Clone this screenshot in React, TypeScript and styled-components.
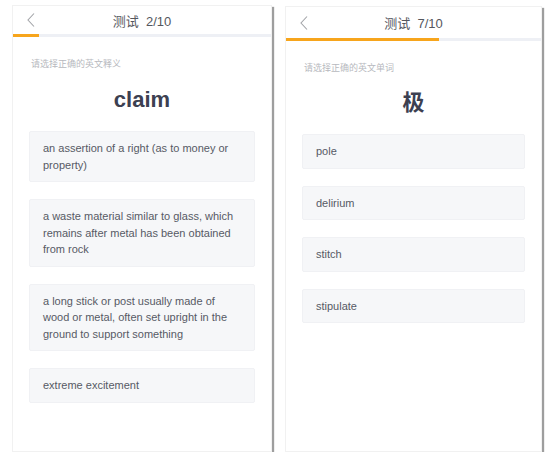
import React from "react";
import styled, { createGlobalStyle } from "styled-components";

const GlobalStyle = createGlobalStyle`
  *, *::before, *::after { box-sizing: border-box; }
  body {
    margin: 0;
    background: #ffffff;
    font-family: "Liberation Sans", "Noto Sans CJK SC", Arial, sans-serif;
  }
`;

const Page = styled.div`
  display: flex;
  align-items: flex-start;
  gap: 13px;
  padding: 5px 0 0 12px;
`;

const Phone = styled.div<{ $w: number; $h: number; $top: number }>`
  width: ${(p) => p.$w}px;
  height: ${(p) => p.$h}px;
  margin-top: ${(p) => p.$top}px;
  background: #ffffff;
  border: 1px solid #f1f1f1;
  box-shadow: 2px 2px 1px rgba(0, 0, 0, 0.38);
  display: flex;
  flex-direction: column;
`;

const Header = styled.div<{ $h: number }>`
  height: ${(p) => p.$h}px;
  display: grid;
  grid-template-columns: 1fr auto 1fr;
  align-items: center;
`;

const Back = styled.div`
  padding-left: 14px;
  display: flex;
  align-items: center;
`;

const Title = styled.div`
  font-family: "Liberation Sans", "Noto Sans CJK SC", sans-serif;
  font-size: 13px;
  color: #55575e;
  white-space: pre;
`;

const Track = styled.div`
  height: 3px;
  background: #eef0f5;
  display: flex;
`;

const Fill = styled.div`
  height: 100%;
  background: #f7a51c;
`;

const Body = styled.div`
  padding: 20px 16px 0;
  display: flex;
  flex-direction: column;
`;

const Hint = styled.div`
  font-family: "Noto Sans CJK SC", sans-serif;
  font-size: 9px;
  line-height: 13px;
  color: #b7b9be;
  padding-left: 2px;
`;

const Word = styled.div<{ $top: number }>`
  margin-top: ${(p) => p.$top}px;
  text-align: center;
  font-family: "Liberation Sans", "Noto Sans CJK SC", sans-serif;
  font-weight: 700;
  font-size: 22px;
  line-height: 30px;
  color: #3c4051;
`;

const Options = styled.div`
  margin-top: 16px;
  display: flex;
  flex-direction: column;
  gap: 17px;
`;

const Option = styled.div`
  background: #f6f7f9;
  border: 1px solid #f0f1f4;
  border-radius: 2px;
  padding: 8px 13px;
  font-size: 11px;
  line-height: 16.5px;
  color: #565a65;
`;

const Chevron = () => (
  <svg width="8" height="14" viewBox="0 0 8 14" fill="none">
    <polyline points="7,0.5 1,7 7,13.5" stroke="#a2a4a8" strokeWidth="1.1" strokeLinejoin="miter" />
  </svg>
);

type Quiz = {
  w: number;
  h: number;
  top: number;
  headerH: number;
  n: number;
  hint: string;
  word: string;
  wordTop: number;
  options: string[];
};

const quizzes: Quiz[] = [
  {
    w: 260,
    h: 447,
    top: 0,
    headerH: 28,
    n: 2,
    hint: "请选择正确的英文释义",
    word: "claim",
    wordTop: 15,
    options: [
      "an assertion of a right (as to money or property)",
      "a waste material similar to glass, which remains after metal has been obtained from rock",
      "a long stick or post usually made of wood or metal, often set upright in the ground to support something",
      "extreme excitement",
    ],
  },
  {
    w: 257,
    h: 446,
    top: 1,
    headerH: 31,
    n: 7,
    hint: "请选择正确的英文单词",
    word: "极",
    wordTop: 14,
    options: ["pole", "delirium", "stitch", "stipulate"],
  },
];

const QuizScreen = ({ q }: { q: Quiz }) => (
  <Phone $w={q.w} $h={q.h} $top={q.top}>
    <Header $h={q.headerH}>
      <Back>
        <Chevron />
      </Back>
      <Title>{`测试  ${q.n}/10`}</Title>
      <div />
    </Header>
    <Track>
      <Fill style={{ width: `${((q.n - 1) / 10) * 100}%` }} />
    </Track>
    <Body>
      <Hint>{q.hint}</Hint>
      <Word $top={q.wordTop}>{q.word}</Word>
      <Options>
        {q.options.map((o) => (
          <Option key={o}>{o}</Option>
        ))}
      </Options>
    </Body>
  </Phone>
);

export default function App() {
  return (
    <>
      <GlobalStyle />
      <Page>
        {quizzes.map((q) => (
          <QuizScreen key={q.word} q={q} />
        ))}
      </Page>
    </>
  );
}
